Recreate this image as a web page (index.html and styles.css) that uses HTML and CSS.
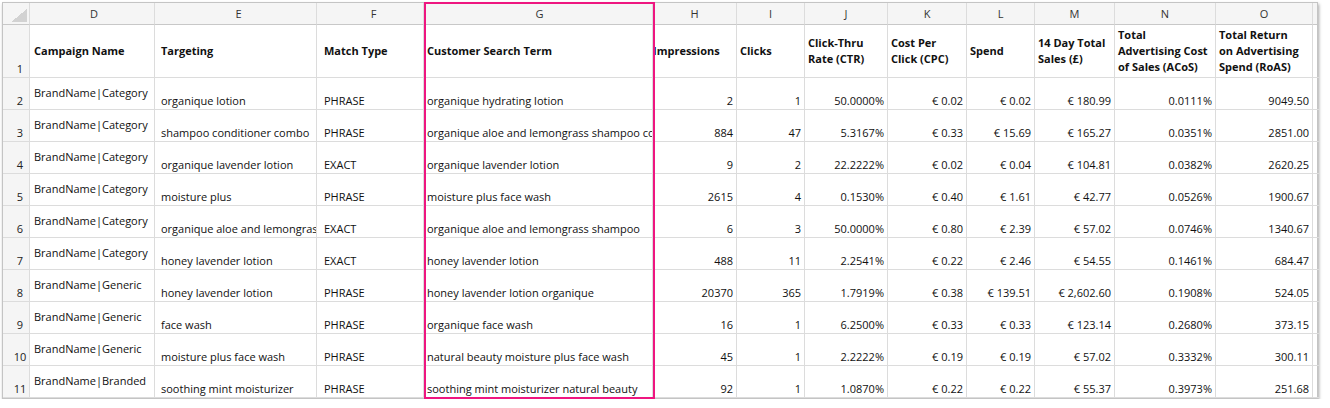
FILE: index.html
```html
<!DOCTYPE html>
<html>
<head>
<meta charset="utf-8">
<link rel="stylesheet" href="styles.css">
</head>
<body>
<div class="frame">
  <div class="sheet">
    <div class="c corner"><span class="tri"></span></div>
    <div class="c col">D</div><div class="c col">E</div><div class="c col">F</div><div class="c col">G</div><div class="c col">H</div><div class="c col">I</div><div class="c col">J</div><div class="c col">K</div><div class="c col">L</div><div class="c col">M</div><div class="c col">N</div><div class="c col">O</div><div class="c col end"></div>

    <div class="c rn hrn">1</div>
    <div class="c h">Campaign Name</div>
    <div class="c h">Targeting</div>
    <div class="c h">Match Type</div>
    <div class="c h">Customer Search Term</div>
    <div class="c h">Impressions</div>
    <div class="c h">Clicks</div>
    <div class="c h">Click-Thru<br>Rate (CTR)</div>
    <div class="c h">Cost Per<br>Click (CPC)</div>
    <div class="c h">Spend</div>
    <div class="c h">14 Day Total<br>Sales (£)</div>
    <div class="c h">Total<br>Advertising Cost<br>of Sales (ACoS)</div>
    <div class="c h">Total Return<br>on Advertising<br>Spend (RoAS)</div>
    <div class="c end"></div>

    <div class="c rn">2</div><div class="c tp">BrandName|Category</div><div class="c">organique lotion</div><div class="c">PHRASE</div><div class="c">organique hydrating lotion</div><div class="c n">2</div><div class="c n">1</div><div class="c n">50.0000%</div><div class="c n">€ 0.02</div><div class="c n">€ 0.02</div><div class="c n">€ 180.99</div><div class="c n">0.0111%</div><div class="c n">9049.50</div><div class="c end"></div>

    <div class="c rn">3</div><div class="c tp">BrandName|Category</div><div class="c">shampoo conditioner combo</div><div class="c">PHRASE</div><div class="c">organique aloe and lemongrass shampoo conditioner</div><div class="c n">884</div><div class="c n">47</div><div class="c n">5.3167%</div><div class="c n">€ 0.33</div><div class="c n">€ 15.69</div><div class="c n">€ 165.27</div><div class="c n">0.0351%</div><div class="c n">2851.00</div><div class="c end"></div>

    <div class="c rn">4</div><div class="c tp">BrandName|Category</div><div class="c">organique lavender lotion</div><div class="c">EXACT</div><div class="c">organique lavender lotion</div><div class="c n">9</div><div class="c n">2</div><div class="c n">22.2222%</div><div class="c n">€ 0.02</div><div class="c n">€ 0.04</div><div class="c n">€ 104.81</div><div class="c n">0.0382%</div><div class="c n">2620.25</div><div class="c end"></div>

    <div class="c rn">5</div><div class="c tp">BrandName|Category</div><div class="c">moisture plus</div><div class="c">PHRASE</div><div class="c">moisture plus face wash</div><div class="c n">2615</div><div class="c n">4</div><div class="c n">0.1530%</div><div class="c n">€ 0.40</div><div class="c n">€ 1.61</div><div class="c n">€ 42.77</div><div class="c n">0.0526%</div><div class="c n">1900.67</div><div class="c end"></div>

    <div class="c rn">6</div><div class="c tp">BrandName|Category</div><div class="c">organique aloe and lemongrass</div><div class="c">EXACT</div><div class="c">organique aloe and lemongrass shampoo</div><div class="c n">6</div><div class="c n">3</div><div class="c n">50.0000%</div><div class="c n">€ 0.80</div><div class="c n">€ 2.39</div><div class="c n">€ 57.02</div><div class="c n">0.0746%</div><div class="c n">1340.67</div><div class="c end"></div>

    <div class="c rn">7</div><div class="c tp">BrandName|Category</div><div class="c">honey lavender lotion</div><div class="c">EXACT</div><div class="c">honey lavender lotion</div><div class="c n">488</div><div class="c n">11</div><div class="c n">2.2541%</div><div class="c n">€ 0.22</div><div class="c n">€ 2.46</div><div class="c n">€ 54.55</div><div class="c n">0.1461%</div><div class="c n">684.47</div><div class="c end"></div>

    <div class="c rn">8</div><div class="c tp">BrandName|Generic</div><div class="c">honey lavender lotion</div><div class="c">PHRASE</div><div class="c">honey lavender lotion organique</div><div class="c n">20370</div><div class="c n">365</div><div class="c n">1.7919%</div><div class="c n">€ 0.38</div><div class="c n">€ 139.51</div><div class="c n">€ 2,602.60</div><div class="c n">0.1908%</div><div class="c n">524.05</div><div class="c end"></div>

    <div class="c rn">9</div><div class="c tp">BrandName|Generic</div><div class="c">face wash</div><div class="c">PHRASE</div><div class="c">organique face wash</div><div class="c n">16</div><div class="c n">1</div><div class="c n">6.2500%</div><div class="c n">€ 0.33</div><div class="c n">€ 0.33</div><div class="c n">€ 123.14</div><div class="c n">0.2680%</div><div class="c n">373.15</div><div class="c end"></div>

    <div class="c rn">10</div><div class="c tp">BrandName|Generic</div><div class="c">moisture plus face wash</div><div class="c">PHRASE</div><div class="c">natural beauty moisture plus face wash</div><div class="c n">45</div><div class="c n">1</div><div class="c n">2.2222%</div><div class="c n">€ 0.19</div><div class="c n">€ 0.19</div><div class="c n">€ 57.02</div><div class="c n">0.3332%</div><div class="c n">300.11</div><div class="c end"></div>

    <div class="c rn">11</div><div class="c tp">BrandName|Branded</div><div class="c">soothing mint moisturizer</div><div class="c">PHRASE</div><div class="c">soothing mint moisturizer natural beauty</div><div class="c n">92</div><div class="c n">1</div><div class="c n">1.0870%</div><div class="c n">€ 0.22</div><div class="c n">€ 0.22</div><div class="c n">€ 55.37</div><div class="c n">0.3973%</div><div class="c n">251.68</div><div class="c end"></div>
  </div>
  <div class="highlight"></div>
</div>
</body>
</html>
```

FILE: styles.css
```css
* { box-sizing: border-box; }
html, body { margin: 0; padding: 0; background: #ffffff; }
body {
  font-family: "Open Sans", "Noto Sans", sans-serif;
  font-size: 11px;
  color: #111;
  padding: 2px 0 0 2px;
}
.frame {
  position: relative;
  width: 1316px;
  border: 1px solid #c4c4c4;
  box-shadow: 1px 2px 3px rgba(0, 0, 0, 0.35);
  background: #fff;
}
.sheet {
  display: grid;
  grid-template-columns: 27px 125px 162px 107px 229px 84px 68px 83px 79px 68px 80px 101px 97px 4px;
  grid-template-rows: 22px 53px repeat(10, 32px);
}
.c {
  border-right: 1px solid #dcdcdc;
  border-bottom: 1px solid #dcdcdc;
  overflow: hidden;
  white-space: nowrap;
  padding: 0 3px 1px 3px;
  display: flex;
  align-items: flex-end;
  line-height: 14px;
}
.c.end { border-right: none; }
/* column-specific left padding */
.sheet > .c:nth-child(14n+2) { padding-left: 4px; }
.sheet > .c:nth-child(14n+3) { padding-left: 6px; }
.sheet > .c:nth-child(14n+4) { padding-left: 7px; }
.sheet > .c:nth-child(14n+5) { padding-left: 3px; }
.sheet > .h:nth-child(14n+6) { padding-left: 0; }

.corner, .col, .rn { background: #f5f5f5; }
.corner {
  border-bottom-color: #c8c8c8;
  padding: 0 2px 2px 0;
  justify-content: flex-end;
  align-items: flex-end;
}
.tri {
  width: 16px;
  height: 13px;
  background: linear-gradient(to bottom right, transparent 50%, #d2d2d2 50%);
}
.sheet > .col {
  justify-content: center;
  align-items: center;
  padding: 0;
  color: #333;
  font-size: 11px;
  border-bottom-color: #c8c8c8;
}
.sheet > .rn {
  justify-content: center;
  padding: 0 0 1px 8px;
  color: #222;
  font-size: 11px;
}
.sheet > .h {
  font-weight: 700;
  align-items: center;
  white-space: normal;
  line-height: 16px;
  padding-bottom: 1px;
  color: #111;
}
.tp {
  align-items: flex-start;
  padding-top: 8px;
}
.n { justify-content: flex-end; }
.highlight {
  position: absolute;
  left: 421px;
  top: -1px;
  width: 231px;
  height: 397px;
  border: 2px solid #ee1680;
  pointer-events: none;
}
```
